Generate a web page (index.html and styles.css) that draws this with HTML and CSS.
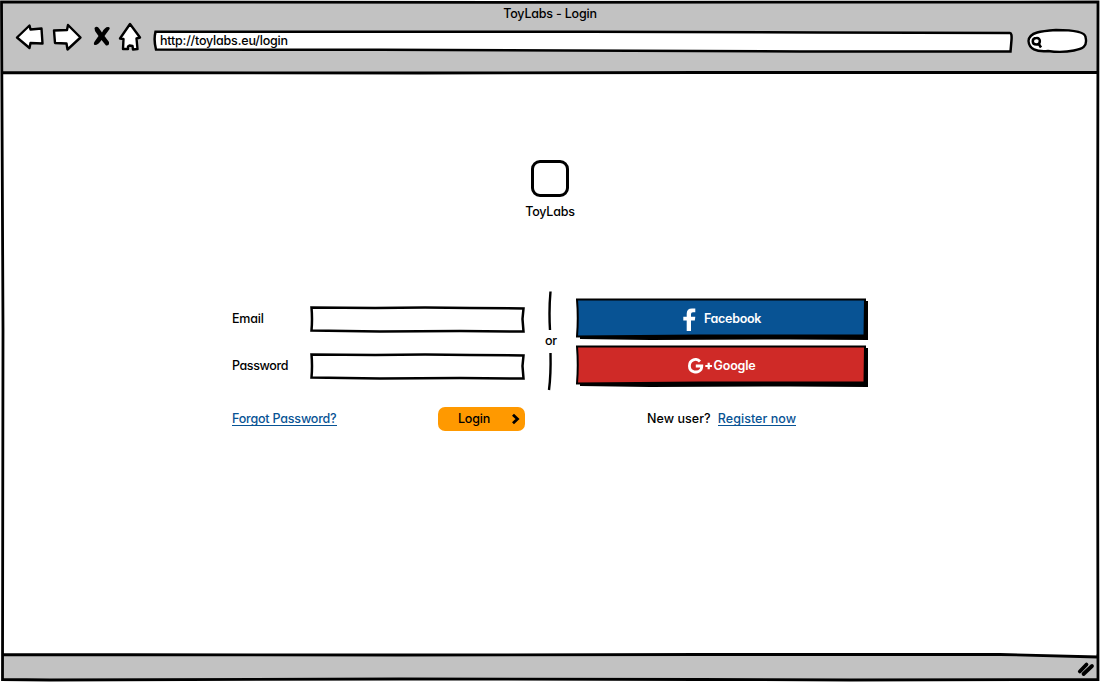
FILE: index.html
```html
<!DOCTYPE html>
<html lang="en">
<head>
<meta charset="utf-8">
<title>ToyLabs - Login</title>
<link rel="stylesheet" href="styles.css">
</head>
<body>
<div class="browser">
  <header class="chrome">
    <div class="title"><span class="t-title">ToyLabs - Login</span></div>
    <div class="toolbar">
      <svg class="nav" width="130" height="34" viewBox="14 20 130 34">
        <g fill="#fff" stroke="#000" stroke-width="2.4" stroke-linejoin="round">
          <path d="M17 37.500 29.500 25.500 30.500 29.500 41.500 28.500 42.500 43.500 30.500 43 29.500 48Z"/>
          <path d="M54 30.500 67 30 68 25 80.500 37.500 67.500 49.500 66.500 43.500 55 43Z"/>
          <path d="M130 24 140 37.500 136.500 38.500 137.500 49 133 49.500 132.500 46 129.500 45.500 128 46.500 128 49 123 49 123.500 39 120 38.500Z"/>
        </g>
        <path d="M94.500 28Q97 25 99.500 29L102 32.500Q105 26.500 108.500 27 111 27.500 108.500 30.500L104.500 36 109 42Q109.500 46 106 45.500L101.500 40Q98 45.500 94.500 45 93 43.500 95 41L98.500 36 95 31Z"/>
      </svg>
      <div class="address">
        <svg class="outline" viewBox="152 29 862 25"><path d="M155.500 31.800 300 31.800 590 31.800 820 32.500 1010 33Q1012 33 1011.500 40L1010.500 51.500 800 51.500 565 50.500 380 49.800 156 49.500Q153.500 40 155.500 31.800Z" fill="#fff" stroke="#000" stroke-width="2.500"/></svg>
        <span class="t-url">http://toylabs.eu/login</span>
      </div>
      <svg class="search" width="62" height="26" viewBox="1026 28 62 26"><path d="M1028.500 41C1029 32 1042 31 1056 30 1075 30 1085 32 1085.500 37 1088 47 1082 49 1074 50.500 1064 52.500 1055 52 1048 51 1036 52 1029 49 1028.500 41Z" fill="#fff" stroke="#000" stroke-width="2.400"/><path d="M1036.500 38C1031.500 38 1031.500 44.500 1036.500 44.500 1041 44.500 1041 37.500 1036.500 38M1038.500 43.500 1041 47.500" fill="none" stroke="#000" stroke-width="2.500"/></svg>
    </div>
  </header>
  <main>
    <div class="brand"><div class="logo"></div><span class="t-brand">ToyLabs</span></div>
    <div class="login">
      <form class="fields">
        <label class="field"><span class="caption"><span class="t-email">Email</span></span>
          <svg width="216" height="28" viewBox="309 305 216 28"><path d="M311.500 307.500 375 308 425 307.500 470 308 523.500 308.500 522.500 319 523.500 331.500 460 331 380 331.500 311.500 330.500Q312.500 319 311.500 307.500Z" fill="#fff" stroke="#000" stroke-width="2.500"/></svg></label>
        <label class="field"><span class="caption"><span class="t-pass">Password</span></span>
          <svg width="216" height="28" viewBox="309 305 216 28"><path d="M311.500 307.500 375 308 425 307.500 470 308 523.500 308.500 522.500 319 523.500 331.500 460 331 380 331.500 311.500 330.500Q312.500 319 311.500 307.500Z" fill="#fff" stroke="#000" stroke-width="2.500"/></svg></label>
        <div class="actions"><a class="t-forgot">Forgot Password?</a>
          <div class="submit"><span class="t-login">Login</span><svg width="10" height="12" viewBox="0 0 10 12"><path d="M2 1.700 6.500 6 2 10.300" fill="none" stroke="#000" stroke-width="2.800"/></svg></div></div>
      </form>
      <div class="divider">
        <svg width="8" height="39" viewBox="546 291 8 39"><path d="M549.500 291.500Q547.800 310 549 330" fill="none" stroke="#000" stroke-width="2.400"/></svg>
        <span class="t-or">or</span>
        <svg width="8" height="39" viewBox="546 352 8 39"><path d="M549.500 353Q550 375 548 390" fill="none" stroke="#000" stroke-width="2.400"/></svg>
      </div>
      <div class="social">
        <div class="provider">
          <svg class="outline" viewBox="576 298 292 42"><path d="M579 301H868V340L790 339.500 650 340 580 339V335Z"/><path d="M577 299.500 865 299.500 864.500 335.500 700 335.500 577 336.500Q578.500 318 577 299.500Z" fill="#085394" stroke="#000" stroke-width="2"/></svg>
          <svg class="fb" width="13" height="23" viewBox="0 0 13 23"><path d="M3.700 23V12.500H.3V8.700H3.700V5.700Q3.700.400 9 .400H12.300V4.200H10Q8 4.200 8 6V8.700H12.300L11.800 12.500H8V23Z" fill="#fff"/></svg>
          <span class="t-fb">Facebook</span>
        </div>
        <div class="provider">
          <svg class="outline" viewBox="576 298 292 42"><path d="M579 301H868V340L790 339.500 650 340 580 339V335Z"/><path d="M577 299.500 865 299.500 864.500 335.500 700 335.500 577 336.500Q578.500 318 577 299.500Z" fill="#cf2a27" stroke="#000" stroke-width="2"/></svg>
          <svg class="gp" width="24" height="16" viewBox="0 0 24 16"><path d="M12 3.500C8.500-.400 1.400 1.400 1.400 8S10 15.600 13 11.500Q13.800 10 13.800 8H7.800" fill="none" stroke="#fff" stroke-width="2.800"/><path d="M17.300 8H24M20.700 4.700V11.300" stroke="#fff" stroke-width="2.200"/></svg>
          <span class="t-google">Google</span>
        </div>
        <div class="register"><span class="t-new">New user?</span><a class="t-register">Register now</a></div>
      </div>
    </div>
  </main>
  <footer class="status"><svg width="20" height="16" viewBox="1076 661 20 16"><path d="M1079.800 671.500 1086.500 664.500M1083.500 674 1092 666" fill="none" stroke="#000" stroke-width="3.800" stroke-linecap="round"/></svg></footer>
  <svg class="frame" viewBox="0 0 1100 682">
    <path d="M950 651H1096V657L1000 655 950 655Z" fill="#fff"/>
    <path d="M1.500 2 500 2.300 1098 2 1097.500 350 1098 679.500 850 680 700 679.500 400 679 50 680 2.500 679.500 3 330 1.500 2ZM2 72.500 420 73 700 72.500 1098 72.500M2 654.500 400 655 700 654.500 1000 654.500 1098 657" fill="none" stroke="#000" stroke-width="2.800"/>
  </svg>
</div>
</body>
</html>
```
FILE: styles.css
```css
* { box-sizing: border-box; }
body { margin: 0; background: #fff; color: #000; font: 450 12.5px/18px Inter, "Noto Sans", sans-serif; letter-spacing: -0.2px; font-feature-settings: "cv11"; white-space: nowrap; }
.browser { position: relative; width: 1100px; height: 682px; padding: 2px; display: flex; flex-direction: column; overflow: hidden; }
.frame { position: absolute; inset: 0; width: 100%; height: 100%; pointer-events: none; }
.chrome { height: 71px; background: #c2c2c2; }
.title { height: 18px; padding-top: 3px; text-align: center; }
.toolbar { display: flex; align-items: flex-start; padding-left: 12px; }
.nav { flex: none; }
.address { position: relative; width: 862px; height: 25px; margin: 9px 12px 0 8px; padding: 3px 0 0 8px; }
.outline { position: absolute; inset: 0; width: 100%; height: 100%; }
.address span, .provider span { position: relative; }
.search { flex: none; margin-top: 8px; }
main { flex: 1; padding: 87px 0 0 230px; }
.brand { width: 636px; display: flex; flex-direction: column; align-items: center; gap: 6px; }
.logo { width: 38px; height: 37px; border: 3px solid #000; border-radius: 9px; }
.login { display: grid; grid-template-columns: 293px 51px 292px; margin-top: 70px; }
.fields { padding-top: 14px; }
.field { display: flex; height: 28px; margin-bottom: 19px; }
.caption { width: 77px; padding-top: 5px; }
.field svg { flex: none; }
.actions { display: flex; justify-content: space-between; align-items: flex-start; padding-top: 8px; }
.submit { display: flex; align-items: center; justify-content: space-between; width: 87px; height: 24px; padding: 0 4px 0 20px; border-radius: 7px; background: #ff9900; }
.submit span { padding-bottom: 1px; }
.divider { display: flex; flex-direction: column; align-items: center; }
.divider span { height: 22px; line-height: 22px; padding-left: 1px; }
.social { padding-top: 7px; }
.provider { position: relative; display: flex; align-items: center; justify-content: center; width: 292px; height: 42px; margin-bottom: 5px; color: #fff; font-weight: 600; }
.fb, .gp { position: relative; }
.fb { margin-right: 8px; }
.gp { margin: 0 2px 0 -1px; }
.register { display: flex; gap: 7px; padding: 18px 0 0 71px; }
a { color: #085394; border-bottom: 1px solid #085394; line-height: 18px; height: 16px; }
.actions a { margin-top: 3px; }
.status { height: 26px; background: #c2c2c2; display: flex; justify-content: flex-end; padding: 7px 2px 0 0; }
.t-title { letter-spacing: -0.2px; }
.t-url { letter-spacing: -0.2px; }
.t-pass { letter-spacing: -0.4px; }
.t-fb { letter-spacing: -0.3px; }
.t-new { letter-spacing: 0.05px; }
.t-register { letter-spacing: 0.05px; }
```
